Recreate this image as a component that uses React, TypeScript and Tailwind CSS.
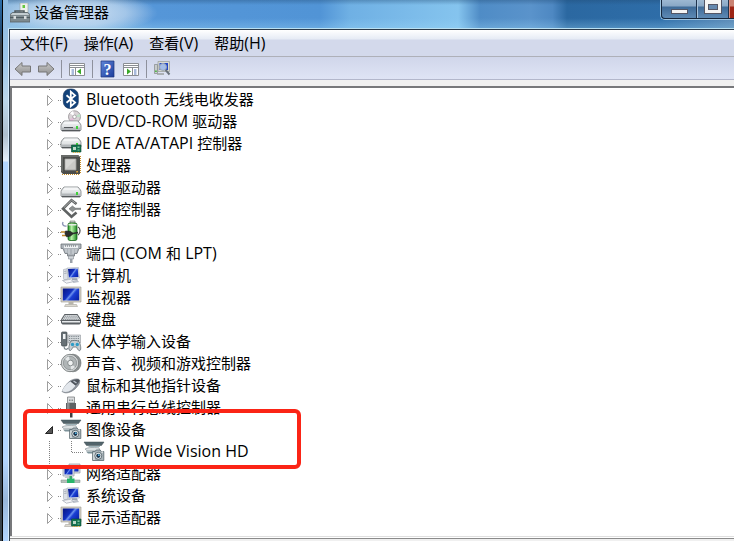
import type { ReactNode } from "react";

interface Device {
  name: string;
  icon: ReactNode;
}

/** Chinese runs are set one pixel smaller than the Latin text beside them. */
function Label({ text }: { text: string }) {
  return (
    <>
      {text.split(/([\u3001\u4e00-\u9fff]+)/).map((run, i) =>
        i % 2 === 1 ? (
          <span key={i} className="text-[15px]">
            {run}
          </span>
        ) : (
          run
        ),
      )}
    </>
  );
}

function Svg({ children }: { children: ReactNode }) {
  return (
    <svg viewBox="0 0 20 20" className="h-5 w-5 shrink-0 overflow-visible" aria-hidden="true">
      {children}
    </svg>
  );
}

/** Shared gradients, referenced by id from the device icons. */
function Gradients() {
  return (
    <svg width="0" height="0" className="absolute" aria-hidden="true">
      <defs>
        <linearGradient id="steel" x1="0" y1="0" x2="0" y2="1">
          <stop offset="0" stopColor="#f4f6f7" />
          <stop offset="1" stopColor="#9a9fa3" />
        </linearGradient>
        <linearGradient id="screen" x1="0" y1="0.2" x2="1" y2="0.8">
          <stop offset="0" stopColor="#0a1a8c" />
          <stop offset="0.4" stopColor="#1230c0" />
          <stop offset="0.5" stopColor="#6d92ee" />
          <stop offset="0.62" stopColor="#1b3fd4" />
          <stop offset="1" stopColor="#0b24ac" />
        </linearGradient>
        <linearGradient id="cell" x1="0" y1="0" x2="1" y2="0">
          <stop offset="0" stopColor="#1c8f22" />
          <stop offset="0.4" stopColor="#b9f2a8" />
          <stop offset="1" stopColor="#18841e" />
        </linearGradient>
        <linearGradient id="help" x1="0" y1="0" x2="1" y2="1">
          <stop offset="0" stopColor="#5f86d8" />
          <stop offset="1" stopColor="#1c3c9c" />
        </linearGradient>
        <linearGradient id="arrow" x1="0" y1="0" x2="0" y2="1">
          <stop offset="0" stopColor="#c9c9c9" />
          <stop offset="1" stopColor="#8d8d8d" />
        </linearGradient>
      </defs>
    </svg>
  );
}

function Drive({ y = 9 }: { y?: number }) {
  return (
    <g transform={`translate(0 ${y})`}>
      <path d="M3 0h14l2.500 3L20 4.500V9l-1 1H1L0 9V4.500L.500 3z" fill="#d9dcde" stroke="#7c8083" strokeWidth="0.8" />
      <path d="M3.500.6h13l2 3H1.500z" fill="#f4f5f6" />
      <path d="M1 4.600h18v4H1z" fill="url(#steel)" />
      <path d="M1 9.600h18" stroke="#4c5052" />
      <path d="M15 5h2v3h-2z" fill="#3fd13a" />
    </g>
  );
}

function Board() {
  return (
    <g>
      <path d="M10.500 11H20v7h-9.500z" fill="#15724f" stroke="#0b4a33" strokeWidth="0.6" />
      <path d="M12 13h3v3h-3z" fill="#b9d8c7" />
      <path d="M16.500 12.500h2V14h-2zM16.500 15.500h2v1h-2z" fill="#7cc8a0" />
      <path d="M12 18.500h7" stroke="#e0b040" strokeDasharray="1 1" />
    </g>
  );
}

function Screen() {
  return (
    <g>
      <path d="M0-1h20v15H0z" fill="#d6d2c6" stroke="#9a978e" strokeWidth="0.6" />
      <path d="M1.800.5h16.400v12H1.800z" fill="url(#screen)" />
      <path d="M7.500 14h5v2.500h-5z" fill="#b8b5ab" />
      <path d="M4.500 16.500h11l1 2h-13z" fill="#dedbd1" stroke="#9a978e" strokeWidth="0.5" />
    </g>
  );
}

function Computer() {
  return (
    <g>
      <path d="M2.500 3.500L7 2.500V13l-3.500 1-1-1.500z" fill="#dde1e6" stroke="#a2a9b3" strokeWidth="0.6" />
      <path d="M3.300 5.500l2.500-.5M3.300 7.500l2.500-.5" stroke="#8f96a2" strokeWidth="0.7" />
      <path d="M6 2l11.500-.5 1 10.500-11 .5z" fill="#e2e6ec" stroke="#a5acb8" strokeWidth="0.6" />
      <path d="M7 2.900l9.700-.4.800 8.500-9.500.4z" fill="url(#screen)" />
      <path d="M11 12.300h5l.8 2h-6z" fill="#9da5b2" />
      <path d="M1.500 14.500l8-1.200 3 2.400-7 1.500z" fill="#f4f5f8" stroke="#9098a5" strokeWidth="0.6" />
      <path d="M12.500 16.500l5-.8-1.200-1.200-4 .7z" fill="#cfd4db" stroke="#8d95a4" strokeWidth="0.5" />
    </g>
  );
}

function Camera() {
  return (
    <Svg>
      <path d="M0 0h20l-2.500 3.500h-15z" fill="#52646b" stroke="#3e4c52" strokeWidth="0.5" />
      <path d="M4.500 4.500h11.500" stroke="#9fb4ba" />
      <path d="M1 7c3-1.800 8-1.800 14-1.200l1 3H3z" fill="#dde3e5" stroke="#7e8a90" strokeWidth="0.6" />
      <path d="M2 9.500h8v2H4z" fill="#7d9299" />
      <path d="M8.600 9.500h2.600l1-1.500h4l1 1.500h2.600v9H8.600z" fill="#a8b3b9" stroke="#59686f" strokeWidth="0.8" />
      <path d="M9.200 10.500h1.500v7.500H9.200z" fill="#d8dfe2" />
      <circle cx="14.300" cy="13.800" r="3.500" fill="#e9eef0" stroke="#46555c" strokeWidth="0.8" />
      <circle cx="14.300" cy="13.800" r="2.100" fill="#18334c" />
      <circle cx="14.800" cy="13.200" r="0.9" fill="#57b7e6" />
      <path d="M17.500 9.500h1.500v1h-1.500z" fill="#fff" />
    </Svg>
  );
}

const DEVICES: Device[] = [
  {
    name: "Bluetooth 无线电收发器",
    icon: (
      <Svg>
        <rect x="2.300" y="-1" width="15" height="19.500" rx="6.500" fill="#12427a" stroke="#0b2c58" strokeWidth="0.6" />
        <path d="M5.500 5.200l8.600 7.400-4.300 3.600V1.800l4.300 3.600-8.600 7.400" fill="none" stroke="#fff" strokeWidth="1.800" />
      </Svg>
    ),
  },
  {
    name: "DVD/CD-ROM 驱动器",
    icon: (
      <Svg>
        <circle cx="13.500" cy="4.800" r="6" fill="#d9d3d6" stroke="#918b8f" strokeWidth="0.8" />
        <path d="M13.500 4.800L9 1.200a6 6 0 0 1 3.200-2.200z" fill="#fff" />
        <path d="M13.500 4.800l5-3a6 6 0 0 1 1 3.500z" fill="#bfe0c8" />
        <path d="M13.500 4.800l-2 5.500a6 6 0 0 1-3-2.500z" fill="#e3bcd8" />
        <circle cx="13.500" cy="4.800" r="1.800" fill="#fff" stroke="#918b8f" strokeWidth="0.7" />
        <Drive />
        <path d="M3 15.500h9" stroke="#53575a" />
      </Svg>
    ),
  },
  {
    name: "IDE ATA/ATAPI 控制器",
    icon: (
      <Svg>
        <Drive y={4} />
        <Board />
      </Svg>
    ),
  },
  {
    name: "处理器",
    icon: (
      <Svg>
        <path d="M1 18.500h18M19.500 0v18" fill="none" stroke="#c48a24" strokeDasharray="1 1" />
        <path d="M0-1h17l2 2v17H2l-2-2z" fill="#4b4d4b" />
        <path d="M0-1h17l2 2H2v15l-2-1z" fill="#696b69" />
        <path d="M4 3h11v11H4z" fill="#c9c9c7" stroke="#9d9d9b" strokeWidth="0.8" />
        <path d="M4.500 13.500l10-10h-10z" fill="#d6d6d4" />
        <path d="M15.300 15h1.600v1.600h-1.600z" fill="#efae3c" />
      </Svg>
    ),
  },
  { name: "磁盘驱动器", icon: <Svg><Drive /></Svg> },
  {
    name: "存储控制器",
    icon: (
      <Svg>
        <path d="M15.500 4l-5-3.800L2 8.800l8.500 8 5-4.300" fill="none" stroke="#5f6262" strokeWidth="2.600" />
        <path d="M14.500 3.200l-4-3L3 7.500" fill="none" stroke="#b4b7b7" strokeWidth="0.9" />
        <path d="M8 8.800l3.500-2.800 3.500 2.800-3.500 2.900z" fill="#8c9090" stroke="#666969" strokeWidth="0.6" />
        <path d="M14 8.800h6" stroke="#858888" strokeWidth="2" />
      </Svg>
    ),
  },
  {
    name: "电池",
    icon: (
      <Svg>
        <path d="M2 0c-1.500 3 1 4.500 3.500 4" fill="none" stroke="#8b93b5" strokeWidth="1.400" />
        <path d="M9-1h5v2H9z" fill="#d2d7d2" stroke="#6c726c" strokeWidth="0.6" />
        <rect x="7" y="1" width="9" height="17.500" rx="1.800" fill="url(#cell)" stroke="#17631b" strokeWidth="0.8" />
        <path d="M7.500 2h8v1.500h-8z" fill="#e4ebe4" />
        <path d="M17 13c3-2 2.500-7 0-8" fill="none" stroke="#4a4a4a" strokeWidth="1.200" />
        <path d="M0 10h4M1 13.500h4" stroke="#c08a2c" strokeWidth="1.400" />
        <path d="M4.500 9l5 .5 3 2-3 2.500-4 .8-1.500-3z" fill="#2d2f2d" stroke="#111" strokeWidth="0.6" />
        <path d="M12 11.500l5-1" stroke="#2d2f2d" strokeWidth="1.600" />
      </Svg>
    ),
  },
  {
    name: "端口 (COM 和 LPT)",
    icon: (
      <Svg>
        <path d="M0 0h20v4.500h-2l-2 5h-2.500V12h-7V9.500H4L2 4.500H0z" fill="#aeb4ba" stroke="#6d737a" strokeWidth="0.8" />
        <path d="M3 1.500h14V4H3z" fill="#eef1f3" />
        <path d="M4 2h12" stroke="#5c6268" strokeDasharray="1 1" />
        <path d="M5 5v3.500M8 5v5M12 5v5M15 5v3.500" stroke="#d3d8dc" />
        <path d="M7.500 12h5v3h-5z" fill="#d1d6da" stroke="#868c92" strokeWidth="0.6" />
        <path d="M9 15h2.500v4H9z" fill="#9aa1a8" />
      </Svg>
    ),
  },
  { name: "计算机", icon: <Svg><Computer /></Svg> },
  { name: "监视器", icon: <Svg><Screen /></Svg> },
  {
    name: "键盘",
    icon: (
      <Svg>
        <path d="M3.500 4h13L20 9.500V13l-1.500 1.500h-17L0 13V9.500z" fill="#5b6064" />
        <path d="M4 5h12l3 5H1z" fill="#d6dadd" />
        <path d="M4 6.200h12M3 7.900h14M2 9.500h16" stroke="#7b8085" strokeWidth="0.9" strokeDasharray="1.200 0.9" />
        <path d="M1 11h18v1.500H1z" fill="#e8ebed" />
      </Svg>
    ),
  },
  {
    name: "人体学输入设备",
    icon: (
      <Svg>
        <path d="M7 3h12.500v8H7z" fill="#d3d8db" stroke="#93999e" strokeWidth="0.6" />
        <path d="M8 4.500h11M8 6.500h11M8 8.500h11" stroke="#838b91" strokeDasharray="1.200 1" />
        <rect x="0.5" y="0" width="5.500" height="14" rx="1" fill="#687176" stroke="#3f474c" strokeWidth="0.7" />
        <path d="M2 2h2.500v5H2z" fill="#f2f5f6" />
        <path d="M3 14c0 4 3 4 4 2" fill="none" stroke="#7d878c" strokeWidth="1.200" />
        <path d="M9.500 9.500c2-1.500 6-1.500 8.500 0 1.500 2.500 2.500 8 1 9s-3-2.500-3.500-3.500H12c-.8 1.500-2.200 4.500-3.600 3.300s0-6.500 1.100-8.800z" fill="#c8ced2" stroke="#566066" strokeWidth="0.7" />
        <circle cx="11.500" cy="12.500" r="1.700" fill="#2d9cc7" />
        <circle cx="16.300" cy="12.500" r="1.700" fill="#2d9cc7" />
      </Svg>
    ),
  },
  {
    name: "声音、视频和游戏控制器",
    icon: (
      <Svg>
        <ellipse cx="12" cy="9" rx="8" ry="8.800" fill="#8f9495" stroke="#666b6c" strokeWidth="0.6" />
        <circle cx="9" cy="9" r="8.700" fill="#d3d6d7" stroke="#6e7374" strokeWidth="0.8" />
        <circle cx="9" cy="9" r="6.700" fill="#b0b5b6" stroke="#838889" strokeWidth="0.7" />
        <path d="M9 9L4 5a6.500 6.500 0 0 1 4-2.500zM9 9l5 4a6.500 6.500 0 0 1-4 2.500z" fill="#e4e7e8" />
        <circle cx="9.500" cy="9" r="2.800" fill="#f0f2f2" stroke="#747a7b" strokeWidth="0.8" />
      </Svg>
    ),
  },
  {
    name: "鼠标和其他指针设备",
    icon: (
      <Svg>
        <path d="M1 15.500c2-4 4-7.500 8-10.500 3-2 8-3 9.500-1 1 2-1 6-4.500 9s-9 5.500-13 2.500z" fill="#8e949d" stroke="#6a7078" strokeWidth="0.6" />
        <path d="M1 15c2-4 5-8 8.500-9.500l5 4C12 13.500 6 18 1 15z" fill="#e3e7ec" />
        <path d="M9.500 5.500c3-2 8-3 9-1.500 0 2-2 4-4 5.500z" fill="#4e545c" />
        <path d="M12.500 5l3 2" stroke="#bdc4ce" strokeWidth="1.300" />
      </Svg>
    ),
  },
  {
    name: "通用串行总线控制器",
    icon: (
      <Svg>
        <path d="M6.500-1h7v6h-7z" fill="#dadcde" stroke="#7e8184" strokeWidth="0.8" />
        <path d="M8 1.500h1.500V3H8zM10.500 1.500H12V3h-1.500z" fill="#8a8d90" />
        <path d="M5 5h10v8l-2 2H7l-2-2z" fill="#5f6264" />
        <path d="M6 5h2.500v8.500H6z" fill="#8c8f91" />
        <path d="M9 15h2.500v4.500H9z" fill="#3e4042" />
      </Svg>
    ),
  },
];

const MORE_DEVICES: Device[] = [
  {
    name: "网络适配器",
    icon: (
      <Svg>
        <path d="M8 0h11v9H8z" fill="#dcdfe4" stroke="#9096a0" strokeWidth="0.7" />
        <path d="M9.500 1.500h8v6h-8z" fill="url(#screen)" />
        <path d="M2 2.500h11V12H2z" fill="#e2e5e9" stroke="#9096a0" strokeWidth="0.7" />
        <path d="M3.500 4h8v6.500h-8z" fill="url(#screen)" />
        <path d="M5 12h6l1.500 2h-9z" fill="#c4c8ce" />
        <path d="M8.500 12H11v3H8.500z" fill="#3ba56a" />
        <path d="M0 16h19v2.500H0z" fill="#b3c0ba" stroke="#7c8a84" strokeWidth="0.5" />
        <path d="M6 14.500h7.500V19H6z" fill="#28b56a" />
      </Svg>
    ),
  },
  { name: "系统设备", icon: <Svg><Computer /></Svg> },
  {
    name: "显示适配器",
    icon: (
      <Svg>
        <Screen />
        <Board />
      </Svg>
    ),
  },
];

function DeviceRow({ device }: { device: Device }) {
  return (
    <li className="flex h-[22px] items-center pl-8">
      <svg viewBox="0 0 17 22" className="h-[22px] w-[17px] shrink-0" aria-hidden="true">
        <path d="M5 0h1v1H5zM14 11h1v1h-1zM16 11h1v1h-1z" fill="#8c8c8c" />
        <path d="M3.500 6.500v10l5-5z" fill="#fff" stroke="#9e9e9e" />
      </svg>
      {device.icon}
      <span className="ml-[5px] pb-[2px] whitespace-nowrap">
        <Label text={device.name} />
      </span>
    </li>
  );
}

function Separator() {
  return <span className="mx-[6px] h-[18px] w-px bg-[#8e919c]" />;
}

function ToolButton({ label, children }: { label: string; children: ReactNode }) {
  return (
    <button type="button" aria-label={label} className="h-[18px] w-[18px]">
      <svg viewBox="0 0 18 18" className="h-[18px] w-[18px]" aria-hidden="true">
        {children}
      </svg>
    </button>
  );
}

function TitleBar() {
  return (
    <header className="flex h-[29px] items-start border-b border-[#b9e0f2] bg-[radial-gradient(ellipse_80px_20px_at_70px_13px,rgba(215,230,245,0.8),rgba(215,230,245,0.5)_60%,rgba(215,230,245,0)),linear-gradient(rgba(30,70,110,0.35)_0px,rgba(30,70,110,0)_5px,rgba(160,220,250,0)_18px,rgba(160,220,250,0.3)_28px),linear-gradient(90deg,#8db9e0_0%,#8ab6e0_12%,#5596d8_20%,#5194d6_43%,#6fb0e4_47%,#85c4ee_62%,#4f8cc6_65%,#5a93cb_72%,#4e88c2_75%,#2b68a1_77%,#2e6da8_90%,#5b89b5_100%)]">
      <svg viewBox="0 0 20 20" className="mt-[3px] ml-[2px] h-5 w-5" aria-hidden="true">
        <path d="M10 0h8v10h-8z" fill="#eef1ec" stroke="#9aa6a6" strokeWidth="0.7" />
        <path d="M12.500 2H15v3h-2.500z" fill="#65c840" />
        <path d="M5 10V8h9v2" fill="none" stroke="#4d585c" strokeWidth="1.500" />
        <path d="M0 11.500L2.500 9.500h15l2.500 2V19H0z" fill="#7f8b90" stroke="#566166" strokeWidth="0.8" />
        <path d="M2.500 10h15l2 2H.500z" fill="#c3ccd0" />
        <path d="M0 14.500h20" stroke="#4e5b61" />
        <path d="M3.500 13H6v3H3.500zM14 13h2.500v3H14z" fill="#d7dcde" />
      </svg>
      <h1 className="ml-1 flex-1 text-[15px] leading-[25px]">设备管理器</h1>
      <div className="flex h-5 rounded-bl-[5px] border-b border-l border-[#9dc3e0]">
        <div className="flex h-[19px] overflow-hidden rounded-bl-[4px] border-b border-l border-[#16283e] bg-[linear-gradient(#9db8d2_0px,#8aa8c6_6px,#3f6b98_7px,#5b87b2_17px)]">
          <button type="button" aria-label="最小化" className="flex w-[35px] items-end justify-center border-r border-[#20344e] pb-1">
            <span className="h-[5px] w-[17px] border border-[#535666] bg-[#f4f4f4]" />
          </button>
          <button type="button" aria-label="最大化" className="flex w-8 items-start justify-center border-r border-l border-[#20344e] border-l-[#a9c4dd]">
            <span className="flex h-[14px] w-[18px] items-center justify-center border border-t-0 border-[#535666] bg-[#f4f4f4]">
              <span className="h-[6px] w-[10px] border border-[#535666] bg-[#6488ae]" />
            </span>
          </button>
          <button type="button" aria-label="关闭" className="w-[5px] border-l border-[#d98c7c] bg-[linear-gradient(#c98272_6px,#9c2415_7px)]" />
        </div>
      </div>
    </header>
  );
}

function Toolbar() {
  return (
    <div role="toolbar" aria-label="工具栏" className="flex h-[23px] items-center border-b border-[#b3b7cb] bg-linear-to-b from-[#d0d6ea] to-[#dfe4f5] pt-[2px] pl-1">
      <div className="flex gap-[5px]">
        <ToolButton label="后退">
          <path d="M1 9l7-6.500V6h8.500v6H8v3.500z" fill="url(#arrow)" stroke="#777" />
        </ToolButton>
        <ToolButton label="前进">
          <path d="M17 9l-7-6.500V6H1.500v6H10v3.500z" fill="url(#arrow)" stroke="#777" />
        </ToolButton>
      </div>
      <Separator />
      <ToolButton label="显示/隐藏控制台树">
        <path d="M1.500 3.500h15v12h-15z" fill="#fff" stroke="#8b8e93" />
        <path d="M2 5.500h14M2 7.500h14M7.500 8v7.500" stroke="#8b8e93" />
        <path d="M3.500 10H6M3.500 12H6M3.500 14H6" stroke="#5277b8" />
        <path d="M13 8.500v6l-4-3z" fill="#3aa828" />
      </ToolButton>
      <Separator />
      <div className="flex gap-[5px]">
        <ToolButton label="帮助">
          <path d="M2 1h13v16H2z" fill="url(#help)" stroke="#1c357c" strokeWidth="0.7" />
          <text x="8.500" y="14.500" textAnchor="middle" fontSize="16" fontFamily="Liberation Serif" fontWeight="bold" fill="#fff">?</text>
        </ToolButton>
        <ToolButton label="属性">
          <path d="M1.500 3.500h15v12h-15z" fill="#fff" stroke="#8b8e93" />
          <path d="M2 5.500h14M2 7.500h14M10.500 8v7.500" stroke="#8b8e93" />
          <path d="M12 10h2.500M12 12h2.500M12 14h2.500" stroke="#5277b8" />
          <path d="M5 8.500v6l4-3z" fill="#3aa828" />
        </ToolButton>
      </div>
      <Separator />
      <ToolButton label="扫描检测硬件改动">
        <path d="M5 1.500h11.500v10H5z" fill="#d9dad4" stroke="#a0a39f" strokeWidth="0.8" />
        <path d="M6.500 3H15v7H6.500z" fill="#2348c8" />
        <path d="M1.500 4.500h3v9h-3z" fill="#c8cccc" stroke="#838888" strokeWidth="0.7" />
        <path d="M2.200 10.500h1.500V12H2.200z" fill="#39b52d" />
        <path d="M4 14h7" stroke="#9b9f9f" strokeWidth="1.500" />
        <circle cx="10" cy="7" r="3.500" fill="#cfe4f6" fillOpacity="0.75" stroke="#9aa4b0" />
        <path d="M12.500 9.800l4 4.700" stroke="#6a727c" strokeWidth="2" />
      </ToolButton>
    </div>
  );
}

export default function App() {
  const menus = ["文件(F)", "操作(A)", "查看(V)", "帮助(H)"];

  return (
    <div className="flex min-h-screen bg-[#34434f] font-['Open_Sans','Noto_Sans_CJK_SC',sans-serif] text-base text-black">
      <Gradients />
      <div className="w-[2px] shrink-0 bg-[linear-gradient(#2c6ea8_0px,#234e78_30px,#39434b_45px,#39434b_100%)]" />
      <div className="flex min-w-0 flex-1 flex-col border-l border-black bg-[linear-gradient(#8fbbe0_0px,#9dc6e8_60px,#bcd6ea_100px,#aebfce_135px,#e4effa_161px,#b2d5fe_162px,#b2d5fe_460px,#98b7da_500px,#b2d5fe_541px)] pl-[5px]">
        <TitleBar />
        <div className="flex flex-1 flex-col border-l border-[#d7ebfb]">
          <main className="flex-1 border-t border-l border-[#2c3c4c] bg-[#f0f0f0]">
            <nav aria-label="菜单" className="flex h-[27px] items-center gap-4 border-b border-[#aeb0b8] bg-[linear-gradient(#ffffff_0px,#e6ebf5_9px,#d3d9eb_10px,#d3d9eb_26px)] pl-[10px]">
              {menus.map((menu) => (
                <button key={menu} type="button" className="whitespace-nowrap">
                  <Label text={menu} />
                </button>
              ))}
            </nav>
            <Toolbar />
            <div className="mt-[6px] border-t-2 border-l-2 border-[#77787b] bg-white pt-px pb-[7px]">
              <ul aria-label="设备">
                {DEVICES.map((device) => (
                  <DeviceRow key={device.name} device={device} />
                ))}
                <li className="relative">
                  <div className="flex h-[22px] items-center pl-8">
                    <svg viewBox="0 0 17 22" className="h-[22px] w-[17px] shrink-0" aria-hidden="true">
                      <path d="M14 11h1v1h-1zM16 11h1v1h-1z" fill="#8c8c8c" />
                      <path d="M8.500 7.500v7h-7z" fill="#555" stroke="#262626" />
                    </svg>
                    <Camera />
                    <span className="ml-[5px] pb-[2px]">
                      <Label text="图像设备" />
                    </span>
                  </div>
                  <ul>
                    <li className="flex h-[22px] items-center pl-8">
                      <svg viewBox="0 0 40 22" className="h-[22px] w-10 shrink-0" aria-hidden="true">
                        <path d="M5.500 0v22M27.500 0v11M28 11.500h12" fill="none" stroke="#808080" strokeDasharray="1 1" />
                      </svg>
                      <Camera />
                      <span className="ml-[5px] pb-[2px]">HP Wide Vision HD</span>
                    </li>
                  </ul>
                  {/* highlight around the imaging branch */}
                  <div className="pointer-events-none absolute -top-[10px] left-[11px] h-[60px] w-[278px] rounded-[6px] border-4 border-[#fb2416]" />
                </li>
                {MORE_DEVICES.map((device) => (
                  <DeviceRow key={device.name} device={device} />
                ))}
              </ul>
            </div>
            <div className="h-[3px] border-t border-[#dfdfdf] border-b border-b-[#8b8b8b] bg-white" />
          </main>
        </div>
      </div>
    </div>
  );
}
